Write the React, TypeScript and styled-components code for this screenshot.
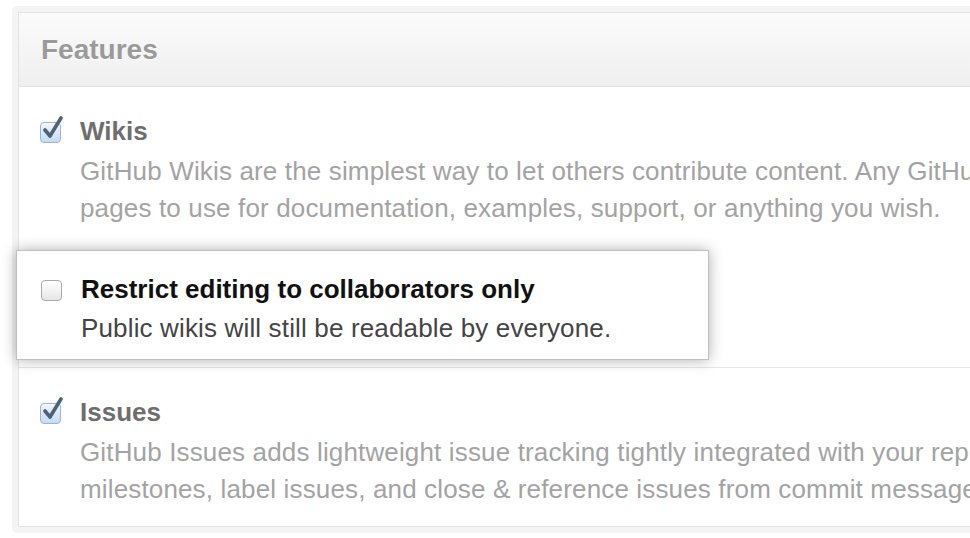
import styled, { createGlobalStyle } from 'styled-components'

const GlobalStyle = createGlobalStyle`
  html, body {
    margin: 0;
    padding: 0;
    background: #ffffff;
    overflow: hidden;
  }
  body {
    font-family: "Liberation Sans", Arial, Helvetica, sans-serif;
  }
`

const Frame = styled.div`
  margin: 6px 0 0 12px;
  padding: 6px;
  width: 1200px;
  background: #f4f4f4;
  border-radius: 5px;
`

const Panel = styled.div`
  background: #ffffff;
  border: 1px solid #e3e3e3;
`

const Header = styled.div`
  height: 73px;
  display: flex;
  align-items: center;
  padding: 0 22px;
  background: linear-gradient(#fbfbfb, #efefef);
  border-bottom: 1px solid #e2e2e2;
`

const HeaderTitle = styled.h3`
  margin: 0;
  font-size: 28px;
  font-weight: bold;
  color: #9a9a9a;
  text-shadow: 0 1px 0 #ffffff;
`

const Section = styled.div<{ $last?: boolean }>`
  padding: 24px 22px ${p => (p.$last ? '18px' : '7px')} 21px;
  border-bottom: ${p => (p.$last ? 'none' : '1px solid #e6e6e6')};
`

const Row = styled.label`
  display: grid;
  grid-template-columns: 40px 1fr;
  align-items: start;
`

const BoxCell = styled.div<{ $h?: number }>`
  height: ${p => p.$h ?? 40}px;
  display: flex;
  align-items: center;
`

const Title = styled.div<{ $strong?: boolean }>`
  font-size: 26px;
  line-height: ${p => (p.$strong ? '38px' : '40px')};
  font-weight: bold;
  color: ${p => (p.$strong ? '#111111' : '#6e6e6e')};
`

const Note = styled.div<{ $dark?: boolean }>`
  padding-top: ${p => (p.$dark ? '1px' : '2px')};
  font-size: 26px;
  line-height: ${p => (p.$dark ? '38px' : '37px')};
  letter-spacing: 0.15px;
  color: ${p => (p.$dark ? '#444444' : '#a3a3a3')};
  white-space: nowrap;
`

const Box = styled.span<{ $checked?: boolean }>`
  position: relative;
  display: inline-block;
  width: 19px;
  height: 19px;
  margin-top: 2px;
  border-radius: 4px;
  border: 1px solid ${p => (p.$checked ? '#9fb2c6' : '#a9a9a9')};
  background: ${p =>
    p.$checked
      ? 'linear-gradient(#eef6ff, #c4dcf4)'
      : 'linear-gradient(#ffffff, #e6e6e6)'};
  box-shadow: inset 0 1px 0 rgba(255, 255, 255, 0.8);
`

const Tick = styled.svg`
  position: absolute;
  left: 1px;
  top: -7px;
  width: 21px;
  height: 24px;
`

const Callout = styled.div`
  margin: 23px 0 0 -24px;
  width: 693px;
  padding: 19px 0 12px 24px;
  background: #ffffff;
  border: 1px solid #bfbfbf;
  box-shadow: 0 0 13px rgba(0, 0, 0, 0.32);
  box-sizing: border-box;
`

const Checkbox = ({ checked, h }: { checked?: boolean; h?: number }) => (
  <BoxCell $h={h}>
    <Box $checked={checked}>
      {checked && (
        <Tick viewBox="0 0 21 24">
          <path
            d="M3 14 L8 20 L19 2"
            fill="none"
            stroke="#4f6275"
            strokeWidth="3.6"
            strokeLinecap="round"
            strokeLinejoin="round"
          />
        </Tick>
      )}
    </Box>
  </BoxCell>
)

const App = () => {
  return (
    <>
      <GlobalStyle />
      <Frame>
        <Panel>
          <Header>
            <HeaderTitle>Features</HeaderTitle>
          </Header>

          <Section>
            <Row>
              <Checkbox checked />
              <div>
                <Title>Wikis</Title>
                <Note>
                  GitHub Wikis are the simplest way to let others contribute content. Any GitHub user can create and edit
                  <br />
                  pages to use for documentation, examples, support, or anything you wish.
                </Note>
              </div>
            </Row>

            <Callout>
              <Row>
                <Checkbox h={38} />
                <div>
                  <Title $strong>Restrict editing to collaborators only</Title>
                  <Note $dark>Public wikis will still be readable by everyone.</Note>
                </div>
              </Row>
            </Callout>
          </Section>

          <Section $last>
            <Row>
              <Checkbox checked />
              <div>
                <Title>Issues</Title>
                <Note>
                  GitHub Issues adds lightweight issue tracking tightly integrated with your repository. Add issues to
                  <br />
                  milestones, label issues, and close &amp; reference issues from commit messages.
                </Note>
              </div>
            </Row>
          </Section>
        </Panel>
      </Frame>
    </>
  )
}

export default App
